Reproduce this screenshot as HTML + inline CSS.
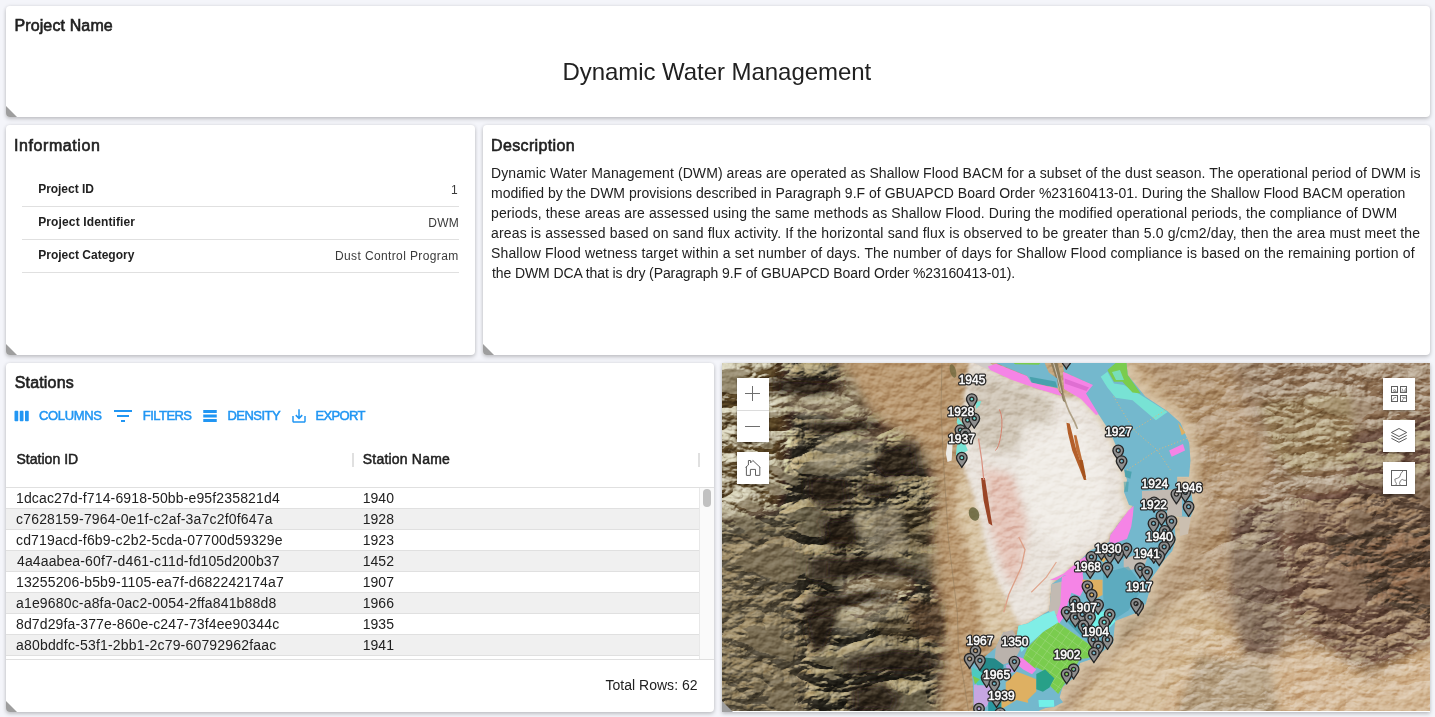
<!DOCTYPE html>
<html>
<head>
<meta charset="utf-8">
<title>Dynamic Water Management</title>
<style>
html,body{margin:0;padding:0;}
body{width:1435px;height:717px;overflow:hidden;background:#f4f5fa;font-family:"Liberation Sans",sans-serif;color:rgba(0,0,0,0.87);position:relative;}
.card{position:absolute;background:#fff;border-radius:4px;box-shadow:0 2px 4px rgba(0,0,0,.2),0 0 4px rgba(0,0,0,.09);overflow:hidden;}
.tri{position:absolute;left:0;bottom:0;width:0;height:0;border-style:solid;border-width:11px 0 0 11px;border-color:transparent transparent transparent #9e9e9e;}
.t{position:absolute;white-space:nowrap;line-height:1;}
.card{will-change:opacity;}
.h6{font-size:16px;color:#212121;-webkit-text-stroke:0.6px #212121;}
.lbl{font-size:12px;font-weight:bold;color:#212121;}
.val{font-size:12px;color:#3a3a3a;}
.hr{position:absolute;height:1px;background:#e0e0e0;}
.desc{font-size:14px;color:#212121;}
.btn{font-size:13px;color:#2196f3;-webkit-text-stroke:0.5px #2196f3;}
.hd{font-size:14px;color:#212121;-webkit-text-stroke:0.5px #212121;}
.cell{font-size:14px;color:#212121;}
.row{position:absolute;left:0;width:693px;height:20px;border-bottom:1px solid #e0e0e0;}
.row.alt{background:#f0f0f0;}
</style>
</head>
<body>

<!-- Project Name card -->
<div class="card" id="c1" style="left:6px;top:6px;width:1424px;height:111px;">
  <div class="t h6" id="t_pn" style="left:8.4px;top:12px;letter-spacing:0.131px;">Project Name</div>
  <div class="t" id="t_title" style="left:-1.2px;width:1424px;text-align:center;top:54px;font-size:24px;color:#212121;letter-spacing:-0.048px;">Dynamic Water Management</div>
  <div class="tri"></div>
</div>

<!-- Information card -->
<div class="card" id="c2" style="left:6px;top:125px;width:469px;height:230px;">
  <div class="t h6" id="t_info" style="left:8px;top:13px;letter-spacing:0.576px;">Information</div>
  <div class="t lbl" id="t_l1" style="left:32.2px;top:58px;letter-spacing:-0.040px;">Project ID</div>
  <div class="t val" id="t_v1" style="right:17.3px;top:59px;letter-spacing:0.000px;">1</div>
  <div class="hr" style="left:16px;width:437px;top:81px;"></div>
  <div class="t lbl" id="t_l2" style="left:32.2px;top:91px;letter-spacing:0.126px;">Project Identifier</div>
  <div class="t val" id="t_v2" style="right:16.2px;top:92px;letter-spacing:0.180px;">DWM</div>
  <div class="hr" style="left:16px;width:437px;top:114px;"></div>
  <div class="t lbl" id="t_l3" style="left:32.2px;top:124px;letter-spacing:0.012px;">Project Category</div>
  <div class="t val" id="t_v3" style="right:16.4px;top:125px;letter-spacing:0.38px;">Dust Control Program</div>
  <div class="hr" style="left:16px;width:437px;top:147px;"></div>
  <div class="tri"></div>
</div>

<!-- Description card -->
<div class="card" id="c3" style="left:483px;top:125px;width:947px;height:230px;">
  <div class="t h6" id="t_desc" style="left:8px;top:13px;letter-spacing:0.360px;">Description</div>
  <div class="t desc" id="d1" style="left:8px;top:41px;letter-spacing:0.089px;">Dynamic Water Management (DWM) areas are operated as Shallow Flood BACM for a subset of the dust season. The operational period of DWM is</div>
  <div class="t desc" id="d2" style="left:8px;top:61px;letter-spacing:0.011px;">modified by the DWM provisions described in Paragraph 9.F of GBUAPCD Board Order %23160413-01. During the Shallow Flood BACM operation</div>
  <div class="t desc" id="d3" style="left:8px;top:81px;letter-spacing:0.122px;">periods, these areas are assessed using the same methods as Shallow Flood. During the modified operational periods, the compliance of DWM</div>
  <div class="t desc" id="d4" style="left:8px;top:101px;letter-spacing:0.156px;">areas is assessed based on sand flux activity. If the horizontal sand flux is observed to be greater than 5.0 g/cm2/day, then the area must meet the</div>
  <div class="t desc" id="d5" style="left:8px;top:121px;letter-spacing:0.150px;">Shallow Flood wetness target within a set number of days. The number of days for Shallow Flood compliance is based on the remaining portion of</div>
  <div class="t desc" id="d6" style="left:9px;top:141px;letter-spacing:-0.099px;">the DWM DCA that is dry (Paragraph 9.F of GBUAPCD Board Order %23160413-01).</div>
  <div class="tri"></div>
</div>

<!-- Stations card -->
<div class="card" id="c4" style="left:6px;top:363px;width:708px;height:349px;">
  <div class="t h6" id="t_st" style="left:8.8px;top:12px;letter-spacing:0.154px;">Stations</div>
  <div class="t btn" id="b1" style="left:33px;top:46px;letter-spacing:-0.360px;">COLUMNS</div>
  <div class="t btn" id="b2" style="left:136.8px;top:46px;letter-spacing:-0.540px;">FILTERS</div>
  <div class="t btn" id="b3" style="left:221.4px;top:46px;letter-spacing:-0.510px;">DENSITY</div>
  <div class="t btn" id="b4" style="left:309.6px;top:46px;letter-spacing:-0.684px;">EXPORT</div>
  <svg style="position:absolute;left:7px;top:44px;" width="18" height="18" viewBox="0 0 24 24" fill="#2196f3"><path d="M6 5H3c-.55 0-1 .45-1 1v12c0 .55.45 1 1 1h3c.55 0 1-.45 1-1V6c0-.55-.45-1-1-1zm14 0h-3c-.55 0-1 .45-1 1v12c0 .55.45 1 1 1h3c.55 0 1-.45 1-1V6c0-.55-.45-1-1-1zm-7 0h-3c-.55 0-1 .45-1 1v12c0 .55.45 1 1 1h3c.55 0 1-.45 1-1V6c0-.55-.45-1-1-1z"/></svg>
  <svg style="position:absolute;left:105px;top:41px;" width="24" height="24" viewBox="0 0 24 24" fill="#2196f3"><path d="M10 18h4v-2h-4v2zM3 6v2h18V6H3zm3 7h12v-2H6v2z"/></svg>
  <svg style="position:absolute;left:195px;top:44px;" width="18" height="18" viewBox="0 0 24 24" fill="#2196f3"><path d="M21,8H3V4h18V8z M21,10H3v4h18V10z M21,16H3v4h18V16z"/></svg>
  <svg style="position:absolute;left:284px;top:44px;" width="18" height="18" viewBox="0 0 24 24" fill="#2196f3"><path d="M19 12v7H5v-7H3v7c0 1.1.9 2 2 2h14c1.1 0 2-.9 2-2v-7h-2zm-6 .67l2.59-2.58L17 11.5l-5 5-5-5 1.41-1.41L11 12.67V3h2z"/></svg>
  <div class="hr" style="left:0;width:708px;top:124px;"></div>
  <div class="row" style="top:125px;"></div>
  <div class="t cell" id="ra0" style="left:10px;top:128px;letter-spacing:0.150px;">1dcac27d-f714-6918-50bb-e95f235821d4</div>
  <div class="t cell" id="rb0" style="left:356.8px;top:128px;letter-spacing:0.000px;">1940</div>
  <div class="row alt" style="top:146px;"></div>
  <div class="t cell" id="ra1" style="left:10px;top:149px;letter-spacing:0.191px;">c7628159-7964-0e1f-c2af-3a7c2f0f647a</div>
  <div class="t cell" id="rb1" style="left:356.8px;top:149px;letter-spacing:0.000px;">1928</div>
  <div class="row" style="top:167px;"></div>
  <div class="t cell" id="ra2" style="left:10px;top:170px;letter-spacing:0.165px;">cd719acd-f6b9-c2b2-5cda-07700d59329e</div>
  <div class="t cell" id="rb2" style="left:356.8px;top:170px;letter-spacing:0.000px;">1923</div>
  <div class="row alt" style="top:188px;"></div>
  <div class="t cell" id="ra3" style="left:11px;top:191px;letter-spacing:0.124px;">4a4aabea-60f7-d461-c11d-fd105d200b37</div>
  <div class="t cell" id="rb3" style="left:356.8px;top:191px;letter-spacing:0.000px;">1452</div>
  <div class="row" style="top:209px;"></div>
  <div class="t cell" id="ra4" style="left:10px;top:212px;letter-spacing:0.139px;">13255206-b5b9-1105-ea7f-d682242174a7</div>
  <div class="t cell" id="rb4" style="left:356.8px;top:212px;letter-spacing:0.000px;">1907</div>
  <div class="row alt" style="top:230px;"></div>
  <div class="t cell" id="ra5" style="left:10px;top:233px;letter-spacing:0.169px;">a1e9680c-a8fa-0ac2-0054-2ffa841b88d8</div>
  <div class="t cell" id="rb5" style="left:356.8px;top:233px;letter-spacing:0.000px;">1966</div>
  <div class="row" style="top:251px;"></div>
  <div class="t cell" id="ra6" style="left:10px;top:254px;letter-spacing:0.134px;">8d7d29fa-377e-860e-c247-73f4ee90344c</div>
  <div class="t cell" id="rb6" style="left:356.8px;top:254px;letter-spacing:0.000px;">1935</div>
  <div class="row alt" style="top:272px;"></div>
  <div class="t cell" id="ra7" style="left:10px;top:275px;letter-spacing:0.185px;">a80bddfc-53f1-2bb1-2c79-60792962faac</div>
  <div class="t cell" id="rb7" style="left:356.8px;top:275px;letter-spacing:0.000px;">1941</div>
  <div class="row" style="top:293px;height:3px;border:0;"></div>
  <div style="position:absolute;left:693px;top:125px;width:15px;height:171px;background:#fafafa;border-left:1px solid #e8e8e8;box-sizing:border-box;"></div>
  <div style="position:absolute;left:697px;top:126px;width:8px;height:18px;border-radius:4px;background:#c1c1c1;"></div>
  <div style="position:absolute;left:346px;top:90px;width:2px;height:14px;background:#e0e0e0;"></div>
  <div style="position:absolute;left:692px;top:90px;width:2px;height:14px;background:#e0e0e0;"></div>
  <div class="hr" style="left:0;width:708px;top:296px;"></div>
  <div class="t cell" id="ft" style="left:599.4px;top:315px;letter-spacing:0.027px;">Total Rows: 62</div>
  <div class="t hd" id="h1" style="left:10.4px;top:89px;letter-spacing:0.040px;">Station ID</div>
  <div class="t hd" id="h2" style="left:356.8px;top:89px;letter-spacing:0.196px;">Station Name</div>
  <div class="tri"></div>
</div>

<!-- Map -->
<div id="map" style="position:absolute;left:722px;top:363px;width:708px;height:349px;overflow:hidden;background:#b89d78;box-shadow:0 2px 4px rgba(0,0,0,.2),0 0 4px rgba(0,0,0,.09);">
<!--MAP_START--><svg width="708" height="349" viewBox="0 0 708 349" style="position:absolute;left:0;top:0;display:block;">
<defs>
<filter id="fb2" x="-20%" y="-20%" width="140%" height="140%"><feGaussianBlur stdDeviation="2"/></filter>
<filter id="fb4" x="-20%" y="-20%" width="140%" height="140%"><feGaussianBlur stdDeviation="4"/></filter>
<filter id="fb8" x="-30%" y="-30%" width="160%" height="160%"><feGaussianBlur stdDeviation="8"/></filter>
<filter id="fb14" x="-30%" y="-30%" width="160%" height="160%"><feGaussianBlur stdDeviation="14"/></filter>
<filter id="fb3" x="-20%" y="-20%" width="140%" height="140%"><feGaussianBlur stdDeviation="3"/></filter><filter id="fb06"><feGaussianBlur stdDeviation="0.6"/></filter><filter id="wsh" x="-20%" y="-20%" width="140%" height="140%"><feDropShadow dx="0" dy="1" stdDeviation="1" flood-color="#000" flood-opacity=".3"/></filter></defs>
<rect width="708" height="349" fill="#c4a67e"/>
<g filter="url(#fb8)"><polygon fill="#716850" points="-20.0,-20.0 112.0,-20.0 128.0,25.0 152.0,55.0 185.0,75.0 205.0,90.0 215.0,130.0 210.0,180.0 215.0,230.0 222.0,290.0 215.0,370.0 -20.0,370.0" /><polygon fill="#9c9074" points="-20.0,-20.0 62.0,-20.0 70.0,60.0 60.0,150.0 -20.0,165.0" /><polygon fill="#7d7054" points="-20.0,170.0 80.0,165.0 88.0,370.0 -20.0,370.0" /><polygon fill="#ba9971" points="116.0,-20.0 250.0,-20.0 242.0,60.0 238.0,110.0 255.0,160.0 268.0,215.0 290.0,262.0 280.0,300.0 262.0,370.0 222.0,370.0 226.0,290.0 218.0,230.0 214.0,180.0 218.0,130.0 208.0,90.0 186.0,74.0 154.0,54.0 130.0,24.0" /><polygon fill="#b99e7e" points="400.0,-20.0 730.0,-20.0 730.0,370.0 300.0,370.0 330.0,330.0 400.0,250.0 470.0,150.0 470.0,60.0" /><polygon fill="#a8927a" points="500.0,-20.0 730.0,-20.0 730.0,273.0 675.0,292.0 646.0,316.0 627.0,292.0 573.0,273.0 558.0,292.0 524.0,292.0 510.0,234.0 510.0,185.0 515.0,146.0 544.0,127.0 549.0,88.0 534.0,63.0 519.0,29.0" /><polygon fill="#d6bb9a" points="340.0,370.0 403.0,292.0 476.0,253.0 510.0,273.0 524.0,296.0 558.0,296.0 573.0,278.0 627.0,294.0 646.0,314.0 730.0,264.0 730.0,370.0" /></g>
<g filter="url(#fb4)"><polygon fill="#a8966c" points="539.0,39.0 627.0,29.0 636.0,97.0 573.0,112.0 549.0,88.0" opacity=".6"/><polygon fill="#7b634c" points="627.0,73.0 730.0,45.0 730.0,273.0 666.0,243.0 646.0,195.0 627.0,146.0" opacity=".45"/><polygon fill="#84705e" points="510.0,146.0 558.0,141.0 563.0,234.0 554.0,292.0 524.0,292.0 510.0,234.0" opacity=".7"/><polygon fill="#7e624a" points="573.0,135.0 730.0,122.0 730.0,268.0 674.0,296.0 629.0,300.0 604.0,280.0 579.0,255.0 562.0,225.0" opacity=".62"/><polygon fill="#644a38" points="604.0,174.0 730.0,170.0 730.0,249.0 654.0,237.0 617.0,199.0" opacity=".55"/><polygon fill="#b4a48c" points="476.0,292.0 549.0,302.0 558.0,360.0 451.0,360.0" opacity=".7"/><polygon fill="#d6bf9e" points="383.0,302.0 476.0,219.0 510.0,273.0 476.0,292.0 427.0,360.0 340.0,360.0" opacity=".8"/><polygon fill="#a08c6c" points="393.2,256.9 428.3,236.8 437.0,247.0 397.0,281.0 378.1,294.0" opacity=".7"/><polygon fill="#d8c4a4" points="238.0,100.0 262.0,150.0 278.0,210.0 298.0,258.0 285.0,285.0 262.0,275.0 250.0,200.0 232.0,150.0" /><polygon fill="#a69678" points="123.0,216.0 179.0,206.0 199.0,224.0 139.0,257.0 116.0,249.0" opacity=".9"/><polygon fill="#9a8c70" points="60.0,20.0 130.0,15.0 150.0,55.0 70.0,50.0" opacity=".9"/><polygon fill="#a08e6c" points="100.0,30.0 150.0,60.0 190.0,75.0 150.0,85.0 110.0,70.0" opacity=".7"/><polygon fill="#6a5238" points="184.0,236.0 219.0,242.0 219.0,279.0 194.0,274.0" opacity=".8"/></g>
<g filter="url(#fb2)"><polygon fill="#e9e3dc" points="248.0,-5.0 262.0,3.0 290.0,17.0 340.0,33.0 359.0,33.0 377.0,52.0 388.0,69.0 395.0,85.0 400.0,102.0 402.0,107.0 405.0,117.0 402.0,129.0 407.0,142.0 411.0,143.0 396.7,160.6 388.3,172.3 387.5,179.0 368.2,187.4 361.5,194.0 341.4,212.5 329.7,221.0 327.5,247.4 305.6,260.5 296.8,262.7 288.0,244.0 272.0,212.0 263.0,182.0 257.0,152.0 248.0,122.0 239.0,100.0 240.0,60.0 243.0,30.0" /></g>
<g filter="url(#fb4)"><polygon fill="#cdc3b4" points="250.0,5.0 330.0,35.0 330.0,70.0 290.0,90.0 255.0,85.0 246.0,40.0" opacity=".9"/><polygon fill="#f1ede9" points="300.0,60.0 360.0,60.0 385.0,110.0 380.0,160.0 340.0,190.0 310.0,160.0 295.0,110.0" opacity=".8"/><polygon fill="#e3bcae" points="262.0,105.0 290.0,112.0 305.0,160.0 300.0,200.0 296.0,222.0 284.0,215.0 270.0,170.0" opacity=".8"/></g>
<defs>
<filter id="hill" x="0" y="0" width="100%" height="100%" color-interpolation-filters="sRGB">
<feTurbulence type="turbulence" baseFrequency="0.012 0.022" numOctaves="5" seed="4" result="n"/>
<feColorMatrix in="n" type="matrix" values="0 0 0 0 0  0 0 0 0 0  0 0 0 0 0  -2.2 0 0 0 1" result="h"/>
<feDiffuseLighting in="h" surfaceScale="9" diffuseConstant="1" lighting-color="#ffffff"><feDistantLight azimuth="60" elevation="27"/></feDiffuseLighting>
</filter>
<filter id="grain" x="0" y="0" width="100%" height="100%" color-interpolation-filters="sRGB">
<feTurbulence type="fractalNoise" baseFrequency="0.09 0.12" numOctaves="3" seed="5" result="n"/>
<feColorMatrix in="n" type="matrix" values="0 0 0 0 0  0 0 0 0 0  0 0 0 0 0  1.2 0 0 0 -0.1" result="h"/>
<feDiffuseLighting in="h" surfaceScale="2.2" diffuseConstant="1" lighting-color="#ffffff"><feDistantLight azimuth="60" elevation="30"/></feDiffuseLighting>
</filter>
<mask id="hmask"><rect width="708" height="349" fill="#000"/><g filter="url(#fb8)">
<polygon fill="#fff" points="-20,-20 106,-20 124,26 150,56 184,76 203,92 212,130 207,180 214,230 218,290 212,370 -20,370"/>
<polygon fill="#8c8c8c" points="-20,140 70,150 84,370 -20,370"/><polygon fill="#888" points="520,-20 730,-20 730,280 646,316 600,290 540,292 510,234 512,150 545,120 545,88"/>
<polygon fill="#444" points="440,0 545,0 520,120 515,205 565,250 625,300 730,296 730,370 420,370 440,300 470,240 480,150"/>
</g></mask>
<filter id="fb3" x="-20%" y="-20%" width="140%" height="140%"><feGaussianBlur stdDeviation="3"/></filter><filter id="fb06"><feGaussianBlur stdDeviation="0.6"/></filter><filter id="wsh" x="-20%" y="-20%" width="140%" height="140%"><feDropShadow dx="0" dy="1" stdDeviation="1" flood-color="#000" flood-opacity=".3"/></filter></defs>
<g mask="url(#hmask)" style="mix-blend-mode:overlay" opacity=".72"><rect width="708" height="349" filter="url(#hill)"/></g>
<g filter="url(#fb3)"><polygon fill="#2e241a" points="49.0,15.0 122.0,19.0 117.0,29.0 88.0,34.0 49.0,29.0" opacity=".7"/><polygon fill="#2e241a" points="83.0,58.0 151.0,56.0 161.0,66.0 97.0,73.0 83.0,68.0" opacity=".7"/><polygon fill="#2e241a" points="161.0,83.0 195.0,78.0 200.0,112.0 161.0,117.0 146.0,102.0" opacity=".7"/><polygon fill="#2e241a" points="83.0,112.0 127.0,114.0 131.0,141.0 97.0,146.0 83.0,131.0" opacity=".7"/><polygon fill="#2e241a" points="136.0,117.0 175.0,122.0 170.0,136.0 141.0,134.0" opacity=".7"/><polygon fill="#2e241a" points="97.0,156.0 136.0,151.0 141.0,180.0 107.0,185.0" opacity=".7"/><polygon fill="#2e241a" points="98.0,172.0 139.0,172.0 134.0,184.0 103.0,181.0" opacity=".7"/><polygon fill="#2e241a" points="88.0,195.0 139.0,192.0 174.0,193.0 179.0,202.0 209.0,207.0 206.0,217.0 174.0,214.0 139.0,212.0 116.0,218.0 88.0,217.0" opacity=".7"/><polygon fill="#2e241a" points="86.0,232.0 139.0,228.0 171.0,225.0 174.0,234.0 139.0,242.0 111.0,247.0 81.0,254.0 78.0,247.0" opacity=".7"/><polygon fill="#2e241a" points="81.0,249.0 118.0,247.0 108.0,274.0 103.0,287.0 91.0,291.0 86.0,274.0" opacity=".7"/><polygon fill="#2e241a" points="123.0,294.0 174.0,284.0 206.0,289.0 224.0,304.0 199.0,309.0 159.0,308.0 123.0,311.0" opacity=".7"/><polygon fill="#2e241a" points="128.0,325.0 161.0,318.0 179.0,335.0 174.0,349.0 128.0,349.0" opacity=".7"/><polygon fill="#4c3a28" points="184.0,237.0 219.0,242.0 221.0,279.0 199.0,274.0 189.0,257.0" opacity=".75"/><polygon fill="#4c3a28" points="154.0,257.0 179.0,252.0 199.0,269.0 174.0,279.0 159.0,274.0" opacity=".6"/><polygon fill="#4c3a28" points="150.0,150.0 205.0,140.0 212.0,185.0 160.0,190.0" opacity=".45"/><polygon fill="#aca086" points="50.0,36.0 120.0,32.0 146.0,52.0 84.0,56.0" opacity=".6"/><polygon fill="#aca086" points="98.0,76.0 160.0,70.0 156.0,84.0 136.0,112.0 90.0,108.0" opacity=".6"/><polygon fill="#aca086" points="116.0,219.0 174.0,215.0 199.0,224.0 174.0,227.0 139.0,228.0 118.0,232.0" opacity=".6"/><polygon fill="#aca086" points="118.0,248.0 171.0,237.0 186.0,249.0 154.0,257.0 139.0,269.0 116.0,274.0" opacity=".6"/><polygon fill="#aca086" points="111.0,289.0 159.0,279.0 174.0,284.0 123.0,294.0" opacity=".6"/><polygon fill="#aca086" points="130.0,150.0 175.0,140.0 185.0,190.0 145.0,192.0" opacity=".6"/></g><g filter="url(#fb2)"><polygon fill="#231a12" points="59.1,17.9 111.6,20.7 108.0,27.9 87.2,31.5 59.1,27.9" opacity=".6"/><polygon fill="#231a12" points="92.0,59.7 140.9,58.3 148.1,65.5 102.0,70.5 92.0,66.9" opacity=".6"/><polygon fill="#231a12" points="164.2,87.3 188.7,83.7 192.3,108.2 164.2,111.8 153.4,101.0" opacity=".6"/><polygon fill="#231a12" points="88.9,116.7 120.6,118.1 123.5,137.6 99.0,141.2 88.9,130.4" opacity=".6"/><polygon fill="#231a12" points="141.5,119.9 169.5,123.5 165.9,133.6 145.1,132.1" opacity=".6"/><polygon fill="#231a12" points="103.5,159.4 131.6,155.8 135.2,176.6 110.7,180.2" opacity=".6"/><polygon fill="#231a12" points="103.7,173.5 133.3,173.5 129.7,182.1 107.3,179.9" opacity=".6"/><polygon fill="#231a12" points="105.7,198.3 142.4,196.1 167.6,196.8 171.2,203.3 192.8,206.9 190.7,214.1 167.6,212.0 142.4,210.5 125.9,214.8 105.7,214.1" opacity=".6"/><polygon fill="#231a12" points="96.2,233.9 134.3,231.0 157.4,228.8 159.5,235.3 134.3,241.1 114.2,244.7 92.6,249.7 90.4,244.7" opacity=".6"/><polygon fill="#231a12" points="85.7,255.0 112.4,253.5 105.2,273.0 101.6,282.3 92.9,285.2 89.3,273.0" opacity=".6"/><polygon fill="#231a12" points="136.9,295.6 173.6,288.4 196.6,292.0 209.6,302.8 191.6,306.4 162.8,305.7 136.9,307.9" opacity=".6"/><polygon fill="#231a12" points="135.3,327.9 159.0,322.8 172.0,335.1 168.4,345.1 135.3,345.1" opacity=".6"/></g><rect width="708" height="349" filter="url(#grain)" style="mix-blend-mode:soft-light" opacity=".55"/>
<g filter="url(#fb06)"><polygon fill="#85775a" points="328.0,-2.0 335.0,-2.0 338.0,10.4 341.5,30.5 344.0,40.0 341.0,38.0 338.0,27.1 334.0,15.4" opacity=".9"/><path d="M341.5,32 Q345,45 349,52 T355.5,66" fill="none" stroke="#a09070" stroke-width="1.6" opacity=".8"/><path d="M331,-2 L335,12 L339.5,30" fill="none" stroke="#e8e2d8" stroke-width="1" opacity=".7"/><polygon fill="#b35f2a" points="344.4,59.8 347.7,60.6 353.6,84.0 360.3,104.1 364.4,117.0 361.9,117.0 356.9,104.1 350.2,87.4 346.0,70.6" /><polygon fill="#bf6e36" points="351.9,72.3 354.4,72.3 360.3,97.4 358.6,99.1 354.4,87.4" /><polygon fill="#a5531f" points="357.3,97.0 360.7,97.0 364.0,113.7 362.4,117.1 359.0,107.0" /><polygon fill="#9a4428" points="259.1,115.0 262.9,115.0 267.9,147.6 270.4,162.7 266.6,160.2 261.6,137.6" /><path d="M277.4,46.4 Q281.5,55 279.1,70.6 T273.2,87.4" fill="none" stroke="#d4826e" stroke-width="1"/><path d="M256.5,75.7 L259.8,97.4 L261.8,117" fill="none" stroke="#d89080" stroke-width="1.2"/><path d="M296.8,174 L303,186.6 L299.3,204.1 L286.7,231.7 L281.7,249.3" fill="none" stroke="#dca088" stroke-width="1.3"/><path d="M334.4,199 L324.4,214.2 L309.3,229.2" fill="none" stroke="#e0a890" stroke-width="1.2"/><ellipse fill="#5e5c34" cx="252.0" cy="151.0" rx="5.0" ry="7.0" transform="rotate(-20.0 252.0 151.0)" opacity=".8"/><ellipse fill="#6a6238" cx="231.0" cy="8.0" rx="3.0" ry="7.0" transform="rotate(-15.0 231.0 8.0)" opacity=".7"/><polygon fill="#eceae6" points="225.5,79.0 230.6,80.7 229.7,97.4 225.5,99.1 223.9,90.7" /><path d="M220,-3 L219,47 L221.4,97.4 L226.5,177 L235.3,249.3 L236.5,287 L242.8,324.6 L246.6,349" fill="none" stroke="#8f7a5c" stroke-width=".8" opacity=".7"/></g>
<polyline fill="none" stroke="#dccbb0" stroke-width="16" opacity=".75" filter="url(#fb4)" points="404.5,0.0 405.7,12.0 423.3,33.4 445.9,48.5 458.4,59.8 467.2,79.9 468.5,97.4 467.0,113.7 455.2,113.7 455.0,126.0 468.6,126.3 472.0,145.5 468.6,154.0 452.0,153.0 453.6,177.0 450.2,188.0 441.9,197.4 435.2,207.5 428.3,217.0 428.2,225.5 423.8,240.8 415.8,249.3 393.2,258.0 391.0,280.2 380.0,289.0 371.3,295.5 358.1,299.9 353.8,313.0 340.6,324.0 336.2,339.3 314.3,349.0"/><!--SHORE-->
<polyline fill="none" stroke="#ddd0ba" stroke-width="9" opacity=".8" filter="url(#fb2)" points="370.0,22.0 359.0,33.0 377.0,52.0 388.0,69.0 395.0,85.0 400.0,102.0 402.0,107.0 405.0,117.0 402.0,129.0 407.0,142.0 411.0,143.0"/><!--CREAM-->
<g id="band"><polygon fill="#74b8cd" points="341.0,0.0 342.0,9.0 370.0,22.0 359.0,33.0 377.0,52.0 388.0,69.0 395.0,85.0 400.0,102.0 402.0,107.0 405.0,117.0 402.0,129.0 407.0,142.0 411.0,143.0 396.7,160.6 388.3,172.3 387.5,179.0 368.2,187.4 361.5,194.0 341.4,212.5 340.6,213.4 329.7,221.0 327.5,247.4 305.6,260.5 296.8,262.7 294.6,272.5 281.5,269.3 273.8,284.6 261.8,294.4 250.8,291.2 248.7,302.0 250.8,319.6 251.9,349.0 314.3,349.0 336.2,339.3 340.6,324.0 353.8,313.0 358.1,299.9 371.3,295.5 380.0,289.0 391.0,280.2 393.2,258.0 415.8,249.3 423.8,240.8 428.2,225.5 428.3,217.0 435.2,207.5 441.9,197.4 450.2,188.0 453.6,177.0 452.0,153.0 468.6,154.0 472.0,145.5 468.6,126.3 455.0,126.0 455.2,113.7 467.0,113.7 468.5,97.4 467.2,79.9 458.4,59.8 445.9,48.5 423.3,33.4 405.7,12.0 404.5,0.0" />
<polygon fill="#cfcac6" points="251.5,0.0 268.2,0.0 290.0,16.2 273.2,9.6" />
<polygon fill="#74b8cd" points="274.1,0.0 322.6,0.0 326.8,9.6 335.2,15.4 336.0,25.1 309.2,19.6 305.0,12.9" />
<polygon fill="#3a9aa2" points="307.5,13.7 333.5,18.4 335.5,24.8 309.7,19.8" opacity=".75"/>
<polygon fill="#f584e6" points="265.7,3.4 274.1,0.7 305.0,12.9 309.2,19.6 335.2,25.5 339.8,33.0 318.4,26.8 290.0,17.1 268.2,7.0" />
<polygon fill="#7acc4e" points="291.6,0.0 318.4,0.0 316.7,1.7 293.3,1.2" />
<polygon fill="#f584e6" points="341.0,8.7 371.0,22.0 364.0,30.5 376.5,51.0 374.0,52.0 359.0,36.0 342.0,26.0" />
<polygon fill="#d060c4" points="342.7,15.4 367.0,24.6 364.4,28.0 342.7,20.4" opacity=".6"/>
<polygon fill="#78e2d4" points="378.7,13.7 385.4,8.7 392.0,20.4 402.0,22.1 418.8,32.1 445.6,48.9 433.9,57.2 410.5,37.2 393.7,34.7 385.4,24.6" />
<polygon fill="#7acc4e" points="385.4,7.0 393.7,0.0 404.5,0.0 405.7,12.0 418.8,30.5 410.5,29.6 400.4,18.8 392.0,18.8" />
<polygon fill="#78e2d4" points="390.0,9.0 398.0,7.0 402.0,17.0 394.0,17.0" opacity=".8"/>
<polygon fill="#f584e6" points="447.1,87.4 461.0,81.1 463.0,87.4 449.7,93.7" />
<polygon fill="#deb062" points="456.0,59.8 463.5,69.8 459.7,72.3" />
<polygon fill="#3a9aa2" points="402.5,107.0 409.7,108.7 408.4,115.7 403.0,113.7" opacity=".7"/>
<polygon fill="#3a9aa2" points="401.7,118.8 406.7,118.8 405.9,128.8 402.2,128.8" opacity=".5"/>
<polygon fill="#c2bab2" points="420.0,128.0 460.0,126.0 460.0,153.0 445.0,153.0 445.0,144.0 420.0,139.0" />
<polygon fill="#cbbfb0" points="457.0,154.0 469.0,154.0 466.0,171.0 458.0,173.0" />
<polygon fill="#f584e6" points="411.7,143.0 410.9,152.2 409.2,164.0 405.0,175.7 391.6,180.7 387.5,179.0 388.3,172.3 396.7,160.6 406.7,147.2" />
<polygon fill="#f584e6" points="359.8,195.7 368.2,190.7 365.7,197.4 361.8,205.8 360.2,212.5 341.4,212.5 334.7,217.0 328.0,217.0 341.4,210.8" />
<polygon fill="#c2bab2" points="401.7,195.7 411.7,192.4 425.1,195.7 421.8,204.1 406.7,207.5 401.7,204.1" />
<polygon fill="#deb062" points="377.4,196.1 385.8,193.7 381.6,199.4" />
<polygon fill="#c2bab2" points="329.7,221.1 340.0,218.5 338.9,240.8 335.4,252.2 327.0,248.7 328.6,234.2" />
<polygon fill="#f584e6" points="340.0,214.1 349.4,210.1 360.8,211.5 362.1,225.5 358.1,233.3 349.4,229.8 344.3,245.2 341.1,255.0 335.4,263.1 324.9,267.5 327.5,260.5 335.1,251.7 338.4,240.8 339.5,218.9" />
<polygon fill="#deb062" points="360.3,216.7 380.5,216.7 380.5,232.0 371.3,236.9 362.5,229.8" />
<polygon fill="#4aa0b4" points="381.1,210.1 406.3,203.6 421.6,223.3 406.3,247.4 393.2,256.1 382.2,245.2 381.1,232.0" opacity=".55"/>
<polygon fill="#72f0e8" points="371.3,251.7 384.8,246.9 393.6,258.3 384.8,267.5 369.1,263.1" />
<polygon fill="#3c98a6" points="345.0,258.7 358.1,253.5 371.3,262.7 369.5,278.5 358.1,271.9" opacity=".8"/>
<polygon fill="#80eee6" points="296.4,262.7 305.6,260.5 320.9,251.7 332.3,247.4 336.7,260.5 323.1,267.5 305.6,282.8 299.5,289.0 294.6,273.6" />
<polygon fill="#7acc4e" points="336.2,259.4 371.7,284.6 366.9,294.9 358.1,296.0 336.2,331.0 327.5,322.2 331.9,315.2 323.1,308.7 314.3,304.3 310.0,306.9 301.2,295.5 305.6,284.6 320.9,269.3" />
<clipPath id="cg"><polygon points="336.2,259.4 371.7,284.6 366.9,294.9 358.1,296.0 336.2,331.0 327.5,322.2 331.9,315.2 323.1,308.7 314.3,304.3 310.0,306.9 301.2,295.5 305.6,284.6 320.9,269.3"/></clipPath>
<path clip-path="url(#cg)" d="M297.1,176.4 L460.1,292.2 M322.7,200.7 L230.1,331.2 M292.7,182.5 L455.8,298.3 M328.8,205.1 L236.2,335.5 M288.4,188.6 L451.5,304.4 M334.9,209.4 L242.3,339.9 M284.0,194.7 L447.1,310.5 M341.0,213.8 L248.4,344.2 M279.7,200.9 L442.8,316.6 M347.2,218.1 L254.5,348.6 M275.3,207.0 L438.4,322.8 M353.3,222.4 L260.7,352.9 M271.0,213.1 L434.1,328.9 M359.4,226.8 L266.8,357.3 M266.7,219.2 L429.7,335.0 M365.5,231.1 L272.9,361.6 M262.3,225.3 L425.4,341.1 M371.6,235.5 L279.0,365.9 M258.0,231.4 L421.1,347.2 M377.7,239.8 L285.1,370.3 M253.6,237.6 L416.7,353.3 M383.9,244.2 L291.2,374.6 M249.3,243.7 L412.4,359.4 M390.0,248.5 L297.4,379.0 M245.0,249.8 L408.0,365.6 M396.1,252.8 L303.5,383.3 M240.6,255.9 L403.7,371.7 M402.2,257.2 L309.6,387.6 M236.3,262.0 L399.4,377.8 M408.3,261.5 L315.7,392.0 M231.9,268.1 L395.0,383.9 M414.4,265.9 L321.8,396.3 M227.6,274.3 L390.7,390.0 M420.6,270.2 L327.9,400.7 M223.2,280.4 L386.3,396.1 M426.7,274.5 L334.0,405.0 M218.9,286.5 L382.0,402.3 M432.8,278.9 L340.2,409.4 M214.6,292.6 L377.7,408.4 M438.9,283.2 L346.3,413.7" stroke="#a6dc86" stroke-width=".6" fill="none" opacity=".8"/>
<polygon fill="#bab2ac" points="281.5,269.3 290.7,267.1 294.6,273.6 298.1,286.8 294.6,293.3 285.9,299.9 279.3,302.1 272.7,295.5 273.8,284.6" />
<polygon fill="#f584e6" points="294.6,293.3 301.2,295.5 314.3,306.5 310.0,311.3 301.2,306.5 295.7,302.1" />
<polygon fill="#f584e6" points="322.7,310.4 330.1,315.2 327.5,320.1 321.8,314.4" />
<polygon fill="#c6a6e2" points="283.7,302.1 294.6,299.5 294.0,309.1 285.9,310.0" />
<polygon fill="#c6a6e2" points="251.9,321.8 268.8,319.6 268.8,337.1 264.0,344.1 251.9,348.5" />
<polygon fill="#258a8a" points="261.8,294.4 272.7,295.5 281.5,302.1 281.5,315.2 272.7,320.1 261.8,315.2 256.3,306.5" />
<polygon fill="#4ccac0" points="250.8,304.3 261.8,310.9 270.6,322.2 255.2,322.2 249.7,310.9" />
<polygon fill="#7acc4e" points="250.8,313.0 257.9,316.3 253.0,321.2" />
<polygon fill="#deb062" points="283.7,319.6 294.6,308.7 301.2,310.9 314.3,316.3 314.3,334.9 305.6,339.8 294.6,337.1 279.3,346.3 279.3,337.1 283.7,328.4" />
<polygon fill="#28a088" points="314.3,310.9 323.1,306.5 332.3,315.2 327.5,324.4 320.9,328.8 314.3,326.2" />
<polygon fill="#74b8cd" points="305.6,337.1 314.3,328.4 336.2,332.8 341.1,339.3 331.9,344.1 314.3,346.3 307.8,344.1" />
<polygon fill="#72f0e8" points="316.5,337.1 331.9,337.1 332.3,343.7 317.0,344.1" />
<polygon fill="#2a98a0" points="266.2,339.3 279.3,337.1 279.3,348.5 266.2,348.5" />
<polyline fill="none" stroke="#e2b676" stroke-width="1" stroke-dasharray="1.2 2" opacity=".8" points="411.7,66.9 433.4,53.5 445.1,46.0"/>
<polyline fill="none" stroke="#e2b676" stroke-width="1" stroke-dasharray="1.2 2" opacity=".8" points="391.6,33.5 411.7,66.9 435.1,87.0 448.5,107.1"/>
<polyline fill="none" stroke="#e2b676" stroke-width="1" stroke-dasharray="1.2 2" opacity=".8" points="405.0,107.1 435.1,87.0 465.2,75.3"/>
<polygon fill="#78e2d4" points="254.0,38.8 259.3,38.0 257.7,42.2 254.0,45.9" />
<polygon fill="#78e2d4" points="235.6,53.9 243.1,63.9 245.9,67.6 238.1,66.0 234.7,59.3" />
<polygon fill="#78e2d4" points="236.4,79.0 243.1,80.7 245.9,87.4 239.8,91.1 233.9,92.7 234.7,84.0" /></g>
<defs><path id="mk" fill-rule="evenodd" d="M0,9.6 C-1.6,6.2 -5.3,3.4 -5.3,-0.2 A5.3,5.3 0 1 1 5.3,-0.2 C5.3,3.4 1.6,6.2 0,9.6 Z M0,-2.2 A2,2 0 1 0 0,1.8 A2,2 0 1 0 0,-2.2 Z"/><filter id="fb3" x="-20%" y="-20%" width="140%" height="140%"><feGaussianBlur stdDeviation="3"/></filter><filter id="fb06"><feGaussianBlur stdDeviation="0.6"/></filter><filter id="wsh" x="-20%" y="-20%" width="140%" height="140%"><feDropShadow dx="0" dy="1" stdDeviation="1" flood-color="#000" flood-opacity=".3"/></filter></defs>
<circle cx="249.8" cy="36.1" r="2.4" fill="#6edcd2"/>
<circle cx="245.6" cy="57.1" r="2.4" fill="#6edcd2"/>
<circle cx="252.3" cy="55.4" r="2.4" fill="#6edcd2"/>
<circle cx="238.4" cy="67.1" r="2.4" fill="#6edcd2"/>
<circle cx="243.4" cy="70.4" r="2.4" fill="#6edcd2"/>
<circle cx="239.8" cy="94.7" r="2.4" fill="#6edcd2"/>
<use href="#mk" x="344.4" y="-3.5" fill="#8e8e8e" stroke="#262626" stroke-width="1.3" stroke-linejoin="round"/>
<use href="#mk" x="249.8" y="36.3" fill="#8e8e8e" stroke="#262626" stroke-width="1.3" stroke-linejoin="round"/>
<use href="#mk" x="245.6" y="57.3" fill="#8e8e8e" stroke="#262626" stroke-width="1.3" stroke-linejoin="round"/>
<use href="#mk" x="252.3" y="55.6" fill="#8e8e8e" stroke="#262626" stroke-width="1.3" stroke-linejoin="round"/>
<use href="#mk" x="238.4" y="67.3" fill="#8e8e8e" stroke="#262626" stroke-width="1.3" stroke-linejoin="round"/>
<use href="#mk" x="243.4" y="70.6" fill="#8e8e8e" stroke="#262626" stroke-width="1.3" stroke-linejoin="round"/>
<use href="#mk" x="239.8" y="94.9" fill="#8e8e8e" stroke="#262626" stroke-width="1.3" stroke-linejoin="round"/>
<use href="#mk" x="396.2" y="87.7" fill="#8e8e8e" stroke="#262626" stroke-width="1.3" stroke-linejoin="round"/>
<use href="#mk" x="399.6" y="98.3" fill="#8e8e8e" stroke="#262626" stroke-width="1.3" stroke-linejoin="round"/>
<use href="#mk" x="463.3" y="129.6" fill="#8e8e8e" stroke="#262626" stroke-width="1.3" stroke-linejoin="round"/>
<use href="#mk" x="454.4" y="131.3" fill="#8e8e8e" stroke="#262626" stroke-width="1.3" stroke-linejoin="round"/>
<use href="#mk" x="466.6" y="143.9" fill="#8e8e8e" stroke="#262626" stroke-width="1.3" stroke-linejoin="round"/>
<use href="#mk" x="432.1" y="139.7" fill="#8e8e8e" stroke="#262626" stroke-width="1.3" stroke-linejoin="round"/>
<use href="#mk" x="439.5" y="153.1" fill="#8e8e8e" stroke="#262626" stroke-width="1.3" stroke-linejoin="round"/>
<use href="#mk" x="449.5" y="158.4" fill="#8e8e8e" stroke="#262626" stroke-width="1.3" stroke-linejoin="round"/>
<use href="#mk" x="431.5" y="160.6" fill="#8e8e8e" stroke="#262626" stroke-width="1.3" stroke-linejoin="round"/>
<use href="#mk" x="442.7" y="168.1" fill="#8e8e8e" stroke="#262626" stroke-width="1.3" stroke-linejoin="round"/>
<use href="#mk" x="447.7" y="176.5" fill="#8e8e8e" stroke="#262626" stroke-width="1.3" stroke-linejoin="round"/>
<use href="#mk" x="442.2" y="184.0" fill="#8e8e8e" stroke="#262626" stroke-width="1.3" stroke-linejoin="round"/>
<use href="#mk" x="431.8" y="190.7" fill="#8e8e8e" stroke="#262626" stroke-width="1.3" stroke-linejoin="round"/>
<use href="#mk" x="437.2" y="193.2" fill="#8e8e8e" stroke="#262626" stroke-width="1.3" stroke-linejoin="round"/>
<use href="#mk" x="404.5" y="185.7" fill="#8e8e8e" stroke="#262626" stroke-width="1.3" stroke-linejoin="round"/>
<use href="#mk" x="379.4" y="187.4" fill="#8e8e8e" stroke="#262626" stroke-width="1.3" stroke-linejoin="round"/>
<use href="#mk" x="396.2" y="190.7" fill="#8e8e8e" stroke="#262626" stroke-width="1.3" stroke-linejoin="round"/>
<use href="#mk" x="387.8" y="191.6" fill="#8e8e8e" stroke="#262626" stroke-width="1.3" stroke-linejoin="round"/>
<use href="#mk" x="369.4" y="194.1" fill="#8e8e8e" stroke="#262626" stroke-width="1.3" stroke-linejoin="round"/>
<use href="#mk" x="385.4" y="205.0" fill="#8e8e8e" stroke="#262626" stroke-width="1.3" stroke-linejoin="round"/>
<use href="#mk" x="368.2" y="205.8" fill="#8e8e8e" stroke="#262626" stroke-width="1.3" stroke-linejoin="round"/>
<use href="#mk" x="418.1" y="205.5" fill="#8e8e8e" stroke="#262626" stroke-width="1.3" stroke-linejoin="round"/>
<use href="#mk" x="425.1" y="209.1" fill="#8e8e8e" stroke="#262626" stroke-width="1.3" stroke-linejoin="round"/>
<use href="#mk" x="365.4" y="223.3" fill="#8e8e8e" stroke="#262626" stroke-width="1.3" stroke-linejoin="round"/>
<use href="#mk" x="369.7" y="232.0" fill="#8e8e8e" stroke="#262626" stroke-width="1.3" stroke-linejoin="round"/>
<use href="#mk" x="416.2" y="243.0" fill="#8e8e8e" stroke="#262626" stroke-width="1.3" stroke-linejoin="round"/>
<use href="#mk" x="414.0" y="240.8" fill="#8e8e8e" stroke="#262626" stroke-width="1.3" stroke-linejoin="round"/>
<use href="#mk" x="352.7" y="238.6" fill="#8e8e8e" stroke="#262626" stroke-width="1.3" stroke-linejoin="round"/>
<use href="#mk" x="376.1" y="241.9" fill="#8e8e8e" stroke="#262626" stroke-width="1.3" stroke-linejoin="round"/>
<use href="#mk" x="344.6" y="249.1" fill="#8e8e8e" stroke="#262626" stroke-width="1.3" stroke-linejoin="round"/>
<use href="#mk" x="353.3" y="254.4" fill="#8e8e8e" stroke="#262626" stroke-width="1.3" stroke-linejoin="round"/>
<use href="#mk" x="360.3" y="251.7" fill="#8e8e8e" stroke="#262626" stroke-width="1.3" stroke-linejoin="round"/>
<use href="#mk" x="368.0" y="254.4" fill="#8e8e8e" stroke="#262626" stroke-width="1.3" stroke-linejoin="round"/>
<use href="#mk" x="387.7" y="251.7" fill="#8e8e8e" stroke="#262626" stroke-width="1.3" stroke-linejoin="round"/>
<use href="#mk" x="382.2" y="259.4" fill="#8e8e8e" stroke="#262626" stroke-width="1.3" stroke-linejoin="round"/>
<use href="#mk" x="361.4" y="262.7" fill="#8e8e8e" stroke="#262626" stroke-width="1.3" stroke-linejoin="round"/>
<use href="#mk" x="371.3" y="276.9" fill="#8e8e8e" stroke="#262626" stroke-width="1.3" stroke-linejoin="round"/>
<use href="#mk" x="385.5" y="276.9" fill="#8e8e8e" stroke="#262626" stroke-width="1.3" stroke-linejoin="round"/>
<use href="#mk" x="376.3" y="283.5" fill="#8e8e8e" stroke="#262626" stroke-width="1.3" stroke-linejoin="round"/>
<use href="#mk" x="371.9" y="290.1" fill="#8e8e8e" stroke="#262626" stroke-width="1.3" stroke-linejoin="round"/>
<use href="#mk" x="253.5" y="287.9" fill="#8e8e8e" stroke="#262626" stroke-width="1.3" stroke-linejoin="round"/>
<use href="#mk" x="247.6" y="296.0" fill="#8e8e8e" stroke="#262626" stroke-width="1.3" stroke-linejoin="round"/>
<use href="#mk" x="257.9" y="297.7" fill="#8e8e8e" stroke="#262626" stroke-width="1.3" stroke-linejoin="round"/>
<use href="#mk" x="292.4" y="298.8" fill="#8e8e8e" stroke="#262626" stroke-width="1.3" stroke-linejoin="round"/>
<use href="#mk" x="351.6" y="306.5" fill="#8e8e8e" stroke="#262626" stroke-width="1.3" stroke-linejoin="round"/>
<use href="#mk" x="344.6" y="311.3" fill="#8e8e8e" stroke="#262626" stroke-width="1.3" stroke-linejoin="round"/>
<use href="#mk" x="264.6" y="314.8" fill="#8e8e8e" stroke="#262626" stroke-width="1.3" stroke-linejoin="round"/>
<use href="#mk" x="272.3" y="320.7" fill="#8e8e8e" stroke="#262626" stroke-width="1.3" stroke-linejoin="round"/>
<use href="#mk" x="274.5" y="334.9" fill="#8e8e8e" stroke="#262626" stroke-width="1.3" stroke-linejoin="round"/>
<use href="#mk" x="257.0" y="345.9" fill="#8e8e8e" stroke="#262626" stroke-width="1.3" stroke-linejoin="round"/>
<use href="#mk" x="278.2" y="350.3" fill="#8e8e8e" stroke="#262626" stroke-width="1.3" stroke-linejoin="round"/>
<g font-family="Liberation Sans, sans-serif" font-size="12px" text-anchor="middle" stroke-linejoin="round">
<text x="250.0" y="21.3" textLength="26.6" lengthAdjust="spacingAndGlyphs" fill="#262626" stroke="#262626" stroke-width="3.1">1945</text><text x="250.0" y="21.3" textLength="26.6" lengthAdjust="spacingAndGlyphs" fill="#fff" stroke="#fff" stroke-width=".5">1945</text>
<text x="238.9" y="53.1" textLength="26.3" lengthAdjust="spacingAndGlyphs" fill="#262626" stroke="#262626" stroke-width="3.1">1928</text><text x="238.9" y="53.1" textLength="26.3" lengthAdjust="spacingAndGlyphs" fill="#fff" stroke="#fff" stroke-width=".5">1928</text>
<text x="239.5" y="80.2" textLength="26.6" lengthAdjust="spacingAndGlyphs" fill="#262626" stroke="#262626" stroke-width="3.1">1937</text><text x="239.5" y="80.2" textLength="26.6" lengthAdjust="spacingAndGlyphs" fill="#fff" stroke="#fff" stroke-width=".5">1937</text>
<text x="396.5" y="73.2" textLength="26.7" lengthAdjust="spacingAndGlyphs" fill="#262626" stroke="#262626" stroke-width="3.1">1927</text><text x="396.5" y="73.2" textLength="26.7" lengthAdjust="spacingAndGlyphs" fill="#fff" stroke="#fff" stroke-width=".5">1927</text>
<text x="432.9" y="124.6" textLength="26.7" lengthAdjust="spacingAndGlyphs" fill="#262626" stroke="#262626" stroke-width="3.1">1924</text><text x="432.9" y="124.6" textLength="26.7" lengthAdjust="spacingAndGlyphs" fill="#fff" stroke="#fff" stroke-width=".5">1924</text>
<text x="466.8" y="128.8" textLength="26.6" lengthAdjust="spacingAndGlyphs" fill="#262626" stroke="#262626" stroke-width="3.1">1946</text><text x="466.8" y="128.8" textLength="26.6" lengthAdjust="spacingAndGlyphs" fill="#fff" stroke="#fff" stroke-width=".5">1946</text>
<text x="431.7" y="145.9" textLength="26.6" lengthAdjust="spacingAndGlyphs" fill="#262626" stroke="#262626" stroke-width="3.1">1922</text><text x="431.7" y="145.9" textLength="26.6" lengthAdjust="spacingAndGlyphs" fill="#fff" stroke="#fff" stroke-width=".5">1922</text>
<text x="437.2" y="178.2" textLength="27.1" lengthAdjust="spacingAndGlyphs" fill="#262626" stroke="#262626" stroke-width="3.1">1940</text><text x="437.2" y="178.2" textLength="27.1" lengthAdjust="spacingAndGlyphs" fill="#fff" stroke="#fff" stroke-width=".5">1940</text>
<text x="386.1" y="189.9" textLength="26.8" lengthAdjust="spacingAndGlyphs" fill="#262626" stroke="#262626" stroke-width="3.1">1930</text><text x="386.1" y="189.9" textLength="26.8" lengthAdjust="spacingAndGlyphs" fill="#fff" stroke="#fff" stroke-width=".5">1930</text>
<text x="424.8" y="194.9" textLength="26.3" lengthAdjust="spacingAndGlyphs" fill="#262626" stroke="#262626" stroke-width="3.1">1941</text><text x="424.8" y="194.9" textLength="26.3" lengthAdjust="spacingAndGlyphs" fill="#fff" stroke="#fff" stroke-width=".5">1941</text>
<text x="365.7" y="207.8" textLength="26.3" lengthAdjust="spacingAndGlyphs" fill="#262626" stroke="#262626" stroke-width="3.1">1968</text><text x="365.7" y="207.8" textLength="26.3" lengthAdjust="spacingAndGlyphs" fill="#fff" stroke="#fff" stroke-width=".5">1968</text>
<text x="417.2" y="227.7" textLength="26.6" lengthAdjust="spacingAndGlyphs" fill="#262626" stroke="#262626" stroke-width="3.1">1917</text><text x="417.2" y="227.7" textLength="26.6" lengthAdjust="spacingAndGlyphs" fill="#fff" stroke="#fff" stroke-width=".5">1917</text>
<text x="361.4" y="248.9" textLength="27.1" lengthAdjust="spacingAndGlyphs" fill="#262626" stroke="#262626" stroke-width="3.1">1907</text><text x="361.4" y="248.9" textLength="27.1" lengthAdjust="spacingAndGlyphs" fill="#fff" stroke="#fff" stroke-width=".5">1907</text>
<text x="373.5" y="272.5" textLength="26.6" lengthAdjust="spacingAndGlyphs" fill="#262626" stroke="#262626" stroke-width="3.1">1904</text><text x="373.5" y="272.5" textLength="26.6" lengthAdjust="spacingAndGlyphs" fill="#fff" stroke="#fff" stroke-width=".5">1904</text>
<text x="258.0" y="282.0" textLength="26.8" lengthAdjust="spacingAndGlyphs" fill="#262626" stroke="#262626" stroke-width="3.1">1967</text><text x="258.0" y="282.0" textLength="26.8" lengthAdjust="spacingAndGlyphs" fill="#fff" stroke="#fff" stroke-width=".5">1967</text>
<text x="293.0" y="282.8" textLength="26.9" lengthAdjust="spacingAndGlyphs" fill="#262626" stroke="#262626" stroke-width="3.1">1350</text><text x="293.0" y="282.8" textLength="26.9" lengthAdjust="spacingAndGlyphs" fill="#fff" stroke="#fff" stroke-width=".5">1350</text>
<text x="345.1" y="296.0" textLength="26.9" lengthAdjust="spacingAndGlyphs" fill="#262626" stroke="#262626" stroke-width="3.1">1902</text><text x="345.1" y="296.0" textLength="26.9" lengthAdjust="spacingAndGlyphs" fill="#fff" stroke="#fff" stroke-width=".5">1902</text>
<text x="274.6" y="315.7" textLength="27.3" lengthAdjust="spacingAndGlyphs" fill="#262626" stroke="#262626" stroke-width="3.1">1965</text><text x="274.6" y="315.7" textLength="27.3" lengthAdjust="spacingAndGlyphs" fill="#fff" stroke="#fff" stroke-width=".5">1965</text>
<text x="279.3" y="337.1" textLength="26.7" lengthAdjust="spacingAndGlyphs" fill="#262626" stroke="#262626" stroke-width="3.1">1939</text><text x="279.3" y="337.1" textLength="26.7" lengthAdjust="spacingAndGlyphs" fill="#fff" stroke="#fff" stroke-width=".5">1939</text>
</g>
<g filter="url(#wsh)">
<rect x="15.0" y="15.0" width="32" height="64" fill="#fff"/><rect x="15.0" y="89.0" width="32" height="32" fill="#fff"/><rect x="661.0" y="15.0" width="32" height="32" fill="#fff"/><rect x="661.0" y="57.0" width="32" height="32" fill="#fff"/><rect x="661.0" y="99.0" width="32" height="32" fill="#fff"/>
</g>
<g stroke="#6e6e6e" stroke-width="1" fill="none" transform="translate(-722,-363)">
<path d="M737,410.5H769" stroke="#dcdcdc"/>
<path d="M745,393.5H760M752.5,386V401"/>
<path d="M745,426.5H760"/>
<path d="M745.5,467.4 L748.4,465 V460.5 H750.6 V462.9 L752.85,460.5 L760.2,467.4 M746.4,467 V475.4 H750.4 V469.4 H755.5 V475.4 H759.8 V467" stroke="#606060"/>
<rect x="1391.5" y="386.5" width="6" height="6" stroke="#606060"/>
<rect x="1400.5" y="386.5" width="6" height="6" stroke="#606060"/>
<rect x="1391.5" y="395.5" width="6" height="6" stroke="#606060"/>
<rect x="1400.5" y="395.5" width="6" height="6" stroke="#606060"/>
<path d="M1393,388.2 l.1,0 M1394.5,389 l-1.2,2.2 l3,.6 l-1.8,-2.8 M1402,388.5 l1.2,2.8 M1406,388 l-2,4 M1402,392 v-1.5 M1405.5,392 v-1.5 M1392.5,400.5 q.3,-3 3.6,-3.2 M1402,397.2 l4,1 M1405.5,397 q-3,1.5 -3.3,4" stroke-width=".9" stroke="#8a8a8a"/>
<path d="M1399,428.5 L1406.7,432.5 L1399,436.5 L1391.4,432.5 Z M1391.4,435.4 L1399,439.4 L1406.7,435.4 M1391.4,438.3 L1399,442.3 L1406.7,438.3" stroke="#5a5a5a" stroke-linejoin="miter"/>
<rect x="1391.5" y="470.5" width="15" height="15" stroke="#606060"/>
<path d="M1403.1,470.7 L1400.9,473.6 L1399.5,477.2 L1397.3,478.3 L1394.8,479.2 L1395.3,481.6 L1396.4,483.4 L1395.9,485.4 M1406.7,480.3 H1404 L1402.2,479.4 L1400.4,480.75 L1399.5,483.4 L1400.4,485.4" stroke-width=".9" stroke="#707070"/>
</g>
</svg><!--MAP_END-->
  <div id="mapwhite" style="position:absolute;left:0;bottom:0;width:708px;height:1px;background:#fff;"></div>
  <div class="tri"></div>
</div>

</body>
</html>
